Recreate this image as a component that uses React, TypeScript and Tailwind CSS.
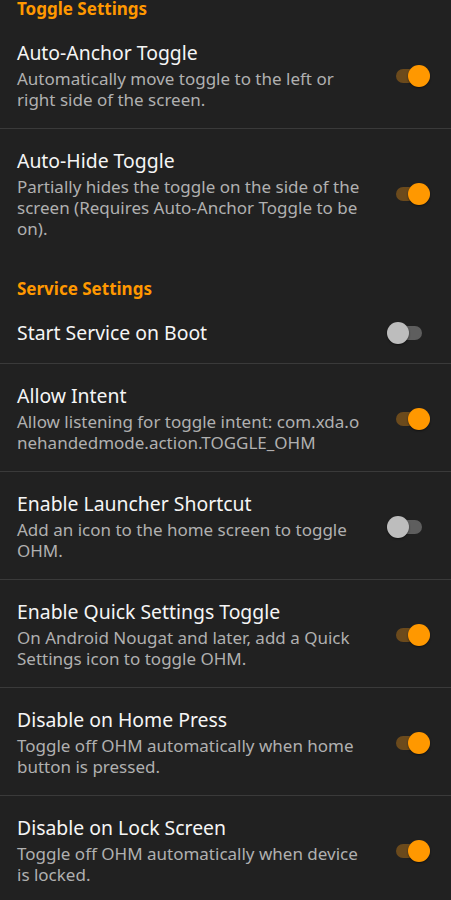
import React, { useState } from 'react';

type Item = {
  title: string;
  summary?: string;
  on: boolean;
  divider?: boolean;
  breakAll?: boolean;
};

const toggleSettings: Item[] = [
  { title: 'Auto-Anchor Toggle', summary: 'Automatically move toggle to the left or right side of the screen.', on: true, divider: true },
  { title: 'Auto-Hide Toggle', summary: 'Partially hides the toggle on the side of the screen (Requires Auto-Anchor Toggle to be on).', on: true },
];

const serviceSettings: Item[] = [
  { title: 'Start Service on Boot', on: false, divider: true },
  { title: 'Allow Intent', summary: 'Allow listening for toggle intent: com.xda.onehandedmode.action.TOGGLE_OHM', on: true, divider: true, breakAll: true },
  { title: 'Enable Launcher Shortcut', summary: 'Add an icon to the home screen to toggle OHM.', on: false, divider: true },
  { title: 'Enable Quick Settings Toggle', summary: 'On Android Nougat and later, add a Quick Settings icon to toggle OHM.', on: true, divider: true },
  { title: 'Disable on Home Press', summary: 'Toggle off OHM automatically when home button is pressed.', on: true, divider: true },
  { title: 'Disable on Lock Screen', summary: 'Toggle off OHM automatically when device is locked.', on: true },
];

const Switch: React.FC<{ on: boolean; onClick: () => void }> = ({ on, onClick }) => (
  <button onClick={onClick} className="flex items-center justify-end w-[44px] h-[24px] shrink-0 mr-[21px]">
    {on ? (
      <>
        <span className="w-[34px] h-[14px] rounded-full bg-[#6b4a1c]" />
        <span className="-ml-[22px] w-[22px] h-[22px] rounded-full bg-[#ff9800] shadow-[0_1px_2px_rgba(0,0,0,0.5)]" />
      </>
    ) : (
      <div className="flex items-center mr-[8px]">
        <span className="relative z-10 w-[22px] h-[22px] rounded-full bg-[#bdbdbd] shadow-[0_1px_2px_rgba(0,0,0,0.5)]" />
        <span className="-ml-[21px] w-[34px] h-[14px] rounded-full bg-[#5e5e5e]" />
      </div>
    )}
  </button>
);

const Row: React.FC<{ item: Item }> = ({ item }) => {
  const [on, setOn] = useState(item.on);
  return (
    <div className={item.divider ? 'border-b border-[#3a3a3a]' : ''}>
      <div className="flex items-center pl-[17px] pt-[20px] pb-[18px]">
        <div className="flex-1 min-w-0 pr-[10px]">
          <div className="text-[19.4px] leading-[24px] text-[#f5f5f5]">{item.title}</div>
          {item.summary && (
            <div className={`mt-[3px] w-[345px] text-[17px] leading-[21px] text-[#b0b0b0] ${item.breakAll ? 'break-all' : ''}`}>
              {item.summary}
            </div>
          )}
        </div>
        <Switch on={on} onClick={() => setOn(!on)} />
      </div>
    </div>
  );
};

const Header: React.FC<{ label: string; first?: boolean }> = ({ label, first }) => (
  <div className={`pl-[17px] ${first ? '-mt-[3px]' : 'pt-[20px]'} text-[17px] leading-[24px] font-bold text-[#ff9800]`}>
    {label}
  </div>
);

export default function App() {
  return (
    <div className="min-h-screen bg-[#212121] overflow-hidden" style={{ fontFamily: '"Noto Sans", "Open Sans", sans-serif' }}>
      <Header label="Toggle Settings" first />
      {toggleSettings.map((it) => (
        <Row key={it.title} item={it} />
      ))}
      <Header label="Service Settings" />
      {serviceSettings.map((it) => (
        <Row key={it.title} item={it} />
      ))}
    </div>
  );
}
